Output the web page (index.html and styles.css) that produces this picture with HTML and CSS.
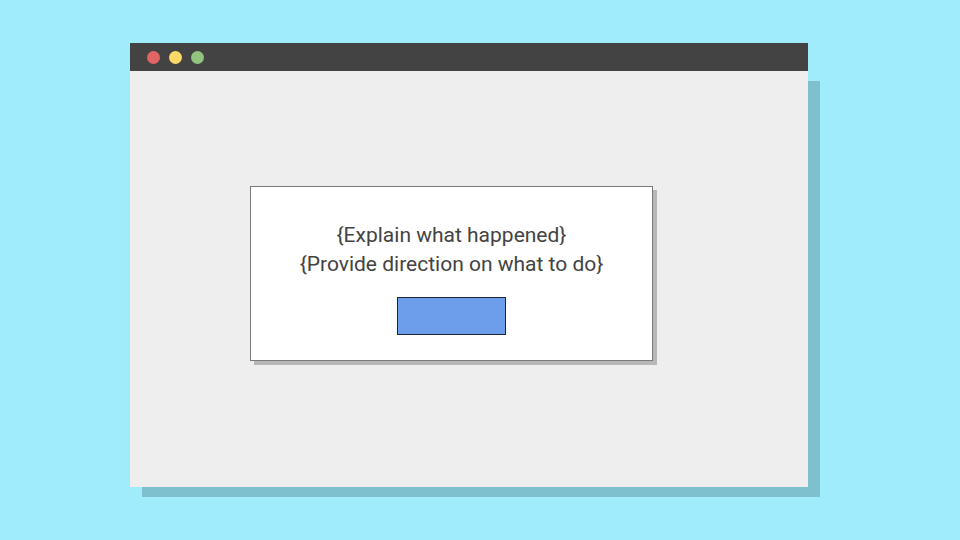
FILE: index.html
```html
<!DOCTYPE html>
<html>
<head>
<meta charset="utf-8">
<link rel="stylesheet" href="styles.css">
</head>
<body>
<div class="window">
  <div class="titlebar">
    <span class="dot red"></span>
    <span class="dot yellow"></span>
    <span class="dot green"></span>
  </div>
  <div class="content">
    <div class="dialog">
      <p class="msg">{Explain what happened}<br>{Provide direction on what to do}</p>
      <div class="button"></div>
    </div>
  </div>
</div>
</body>
</html>
```
FILE: styles.css
```css
html, body {
  margin: 0;
  padding: 0;
}
body {
  width: 960px;
  height: 540px;
  background: #a0ecfd;
  padding: 43px 0 0 130px;
  box-sizing: border-box;
  font-family: Roboto, "Liberation Sans", sans-serif;
  overflow: hidden;
}
.window {
  width: 678px;
}
.titlebar {
  height: 28px;
  background: #434343;
  display: flex;
  align-items: center;
  gap: 9px;
  padding-left: 17px;
  padding-top: 1px;
  box-sizing: border-box;
}
.dot {
  width: 13px;
  height: 13px;
  border-radius: 50%;
}
.red { background: #e06666; }
.yellow { background: #ffd966; }
.green { background: #93c47d; }
.content {
  height: 416px;
  background: #eeeeee;
  box-shadow: 12px 10px 0 #7fc0cf;
  padding: 115px 0 0 120px;
  box-sizing: border-box;
}
.dialog {
  width: 403px;
  height: 175px;
  box-sizing: border-box;
  background: #ffffff;
  border: 1px solid #7a7a7a;
  box-shadow: 4px 4px 0 #b7b7b7;
  display: flex;
  flex-direction: column;
  align-items: center;
  padding-top: 34px;
}
.msg {
  margin: 0;
  font-size: 21px;
  line-height: 29px;
  color: #434343;
  text-align: center;
}
.button {
  margin-top: 18px;
  width: 109px;
  height: 38px;
  box-sizing: border-box;
  background: #6d9eeb;
  border: 1px solid #1c2433;
}
```
